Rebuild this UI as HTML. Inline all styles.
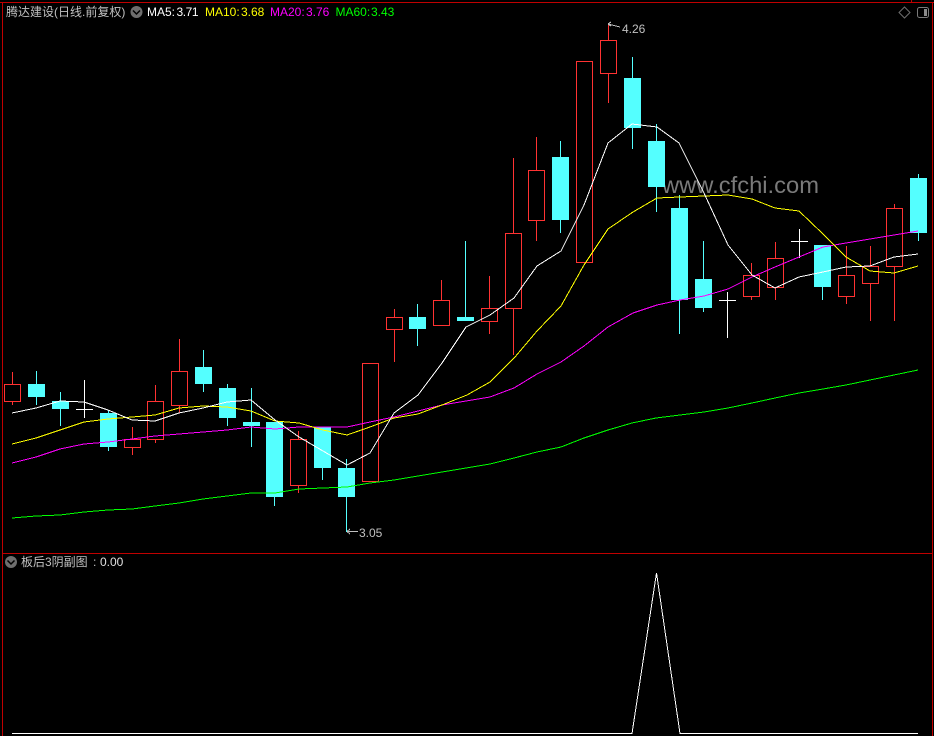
<!DOCTYPE html>
<html><head><meta charset="utf-8"><style>
html,body{margin:0;padding:0;background:#000;width:934px;height:736px;overflow:hidden}
svg{position:absolute;left:0;top:0}
text{font-family:"Liberation Sans","Noto Sans CJK SC",sans-serif;font-size:12px}
</style></head><body>
<svg width="934" height="736" viewBox="0 0 934 736" xmlns="http://www.w3.org/2000/svg">
<rect width="934" height="736" fill="#000"/>
<g shape-rendering="crispEdges" fill="none" stroke="#c00000">
<path d="M0 2.5H934M2.5 2V736M932.5 2V736M2 553.5H933M911.5 0V2"/>
</g>
<!-- watermark -->
<text x="662" y="193" style="font-size:23.5px" fill="#7a7a7a" textLength="157" lengthAdjust="spacingAndGlyphs">www.cfchi.com</text>
<!-- cyan bodies -->
<g fill="#54ffff" shape-rendering="crispEdges">
<rect x="28" y="384" width="17" height="13"/><rect x="52" y="401" width="17" height="8"/><rect x="100" y="413" width="17" height="34"/><rect x="195" y="367" width="17" height="17"/><rect x="219" y="388" width="17" height="30"/><rect x="243" y="422" width="17" height="4"/><rect x="266" y="422" width="17" height="75"/><rect x="314" y="427" width="17" height="41"/><rect x="338" y="468" width="17" height="29"/><rect x="409" y="317" width="17" height="12"/><rect x="457" y="317" width="17" height="4"/><rect x="552" y="157" width="17" height="63"/><rect x="624" y="78" width="17" height="50"/><rect x="648" y="141" width="17" height="46"/><rect x="671" y="208" width="17" height="92"/><rect x="695" y="279" width="17" height="29"/><rect x="814" y="245" width="17" height="42"/><rect x="910" y="178" width="17" height="55"/>
</g>
<!-- cyan wicks -->
<g stroke="#54ffff" fill="none" shape-rendering="crispEdges">
<path d="M36.5 371V384M36.5 397V405M60.5 392V401M60.5 409V426M108.5 410V413M108.5 447V451M203.5 350V367M203.5 384V392M227.5 384V388M227.5 418V426M251.5 388V422M251.5 426V447M274.5 497V506M322.5 468V480M346.5 459V468M346.5 497V532M417.5 304V317M417.5 329V346M465.5 241V317M560.5 141V157M560.5 220V233M632.5 57V78M632.5 128V149M656.5 124V141M656.5 187V212M679.5 195V208M679.5 300V334M703.5 241V279M703.5 308V312M822.5 287V300M918.5 174V178M918.5 233V241"/>
</g>
<!-- red candles -->
<g stroke="#ff3232" fill="none" shape-rendering="crispEdges">
<rect x="4.5" y="384.5" width="16" height="17"/><rect x="124.5" y="439.5" width="16" height="8"/><rect x="147.5" y="401.5" width="16" height="38"/><rect x="171.5" y="371.5" width="16" height="34"/><rect x="290.5" y="439.5" width="16" height="46"/><rect x="362.5" y="363.5" width="16" height="118"/><rect x="386.5" y="317.5" width="16" height="12"/><rect x="433.5" y="300.5" width="16" height="25"/><rect x="481.5" y="308.5" width="16" height="13"/><rect x="505.5" y="233.5" width="16" height="75"/><rect x="528.5" y="170.5" width="16" height="50"/><rect x="576.5" y="61.5" width="16" height="201"/><rect x="600.5" y="40.5" width="16" height="33"/><rect x="743.5" y="275.5" width="16" height="21"/><rect x="767.5" y="258.5" width="16" height="29"/><rect x="838.5" y="275.5" width="16" height="21"/><rect x="862.5" y="266.5" width="16" height="17"/><rect x="886.5" y="208.5" width="16" height="58"/>
<path d="M12.5 372V384M12.5 402V405M132.5 427V439M132.5 448V455M155.5 385V401M155.5 440V443M179.5 339V371M179.5 406V413M298.5 431V439M298.5 486V493M394.5 309V317M394.5 330V362M441.5 280V300M489.5 276V308M489.5 322V334M513.5 158V233M513.5 309V355M536.5 137V170M536.5 221V241M608.5 25V40M608.5 74V103M751.5 263V275M751.5 297V300M775.5 242V258M775.5 288V300M846.5 246V275M846.5 297V304M870.5 246V266M870.5 284V321M894.5 204V208M894.5 267V321"/>
</g>
<!-- doji crosses -->
<g stroke="#ffffff" fill="none" shape-rendering="crispEdges">
<path d="M84.5 380V418M76 409.5H93M727.5 292V338M719 300.5H736M799.5 229V258M791 241.5H808"/>
</g>
<!-- MA60 -->
<polyline fill="none" stroke="#00ff00" shape-rendering="crispEdges" points="12,518 36,516 60,515 84,512 108,510 132,509 155,506 179,503 203,499 227,496 251,493 275,493 299,489 323,488 347,487 370,483 394,480 418,476 442,472 466,468 490,464 514,458 537,452 561,447 584,438 608,430 632,423 656,418 680,415 704,412 728,408 752,403 775,398 799,393 823,389 846,385 870,380 894,375 918,370"/>
<!-- MA20 -->
<polyline fill="none" stroke="#ff00ff" shape-rendering="crispEdges" points="12,463 36,457 60,449 84,444 108,442 132,439 155,436 179,434 203,432 227,430 251,427 275,429 299,427 323,427 347,427 370,422 394,417 418,411 442,405 466,401 490,397 514,388 537,374 561,362 584,346 608,327 633,313 657,305 680,300 704,296 728,289 752,277 775,267 799,257 823,247 846,243 870,239 894,235 918,231"/>
<!-- MA10 -->
<polyline fill="none" stroke="#ffff00" shape-rendering="crispEdges" points="12,444 36,438 60,430 84,422 108,419 132,417 155,415 179,408 203,406 227,407 251,411 275,421 299,423 323,430 347,435 370,427 394,418 418,414 442,405 467,395 490,382 515,357 537,331 561,306 584,265 608,229 633,212 657,198 680,197 704,196 728,195 752,199 775,208 799,211 823,234 846,257 870,271 894,273 918,266"/>
<!-- MA5 -->
<polyline fill="none" stroke="#ffffff" shape-rendering="crispEdges" points="12,413 36,408 60,401 84,402 108,410 132,420 155,421 179,413 203,408 227,402 251,400 275,420 299,437 323,451 347,465 370,453 394,413 418,395 442,363 466,327 490,315 514,298 537,266 561,251 584,205 608,143 632,124 657,127 679,143 704,193 728,245 752,275 775,288 799,277 823,272 846,267 870,266 894,257 918,254"/>
<!-- high/low labels -->
<g stroke="#c0c0c0" fill="none" shape-rendering="crispEdges">
<path d="M347 531.5H358M347 531.5L350 529M347 531.5L350 534"/>
<path d="M608 24L620 27M608 24L611 22M608 24L611 26"/>
</g>
<text x="359" y="537" fill="#c0c0c0">3.05</text>
<text x="622" y="33" fill="#c0c0c0">4.26</text>
<!-- header -->
<text x="6" y="16" fill="#c0c0c0">腾达建设(日线.前复权)</text>
<circle cx="136.500" cy="12" r="6" fill="#6e6e6e"/>
<path d="M133 10.500L136.500 14L140 10.500" stroke="#000" stroke-width="1.500" fill="none"/>
<text x="147" y="16" fill="#ffffff">MA5:</text><text x="176.500" y="16" fill="#ffffff" textLength="22">3.71</text>
<text x="205" y="16" fill="#ffff00">MA10:</text><text x="241" y="16" fill="#ffff00">3.68</text>
<text x="270" y="16" fill="#ff00ff">MA20:</text><text x="306" y="16" fill="#ff00ff">3.76</text>
<text x="335.500" y="16" fill="#00ff00">MA60:</text><text x="371" y="16" fill="#00ff00">3.43</text>
<path d="M904.500 7L910 12.500L904.500 18L899 12.500Z" fill="none" stroke="#6e6e6e"/>
<rect x="917.500" y="7.500" width="11" height="10" rx="2" fill="none" stroke="#7a7a7a"/>
<rect x="924" y="9" width="3" height="7" fill="#8a8a8a"/>
<!-- sub panel -->
<circle cx="11" cy="562" r="6" fill="#6e6e6e"/>
<path d="M7.500 560.500L11 564L14.500 560.500" stroke="#000" stroke-width="1.500" fill="none"/>
<text x="21" y="566" fill="#c0c0c0">板后3阴副图</text>
<text x="93" y="566" fill="#c0c0c0">:</text>
<text x="100" y="566" fill="#e0e0e0">0.00</text>
<polyline fill="none" stroke="#ffffff" stroke-width="1" shape-rendering="crispEdges" points="12,733.500 632,733.500 656.500,573 680,733.500 918,733.500"/>
</svg>
</body></html>
